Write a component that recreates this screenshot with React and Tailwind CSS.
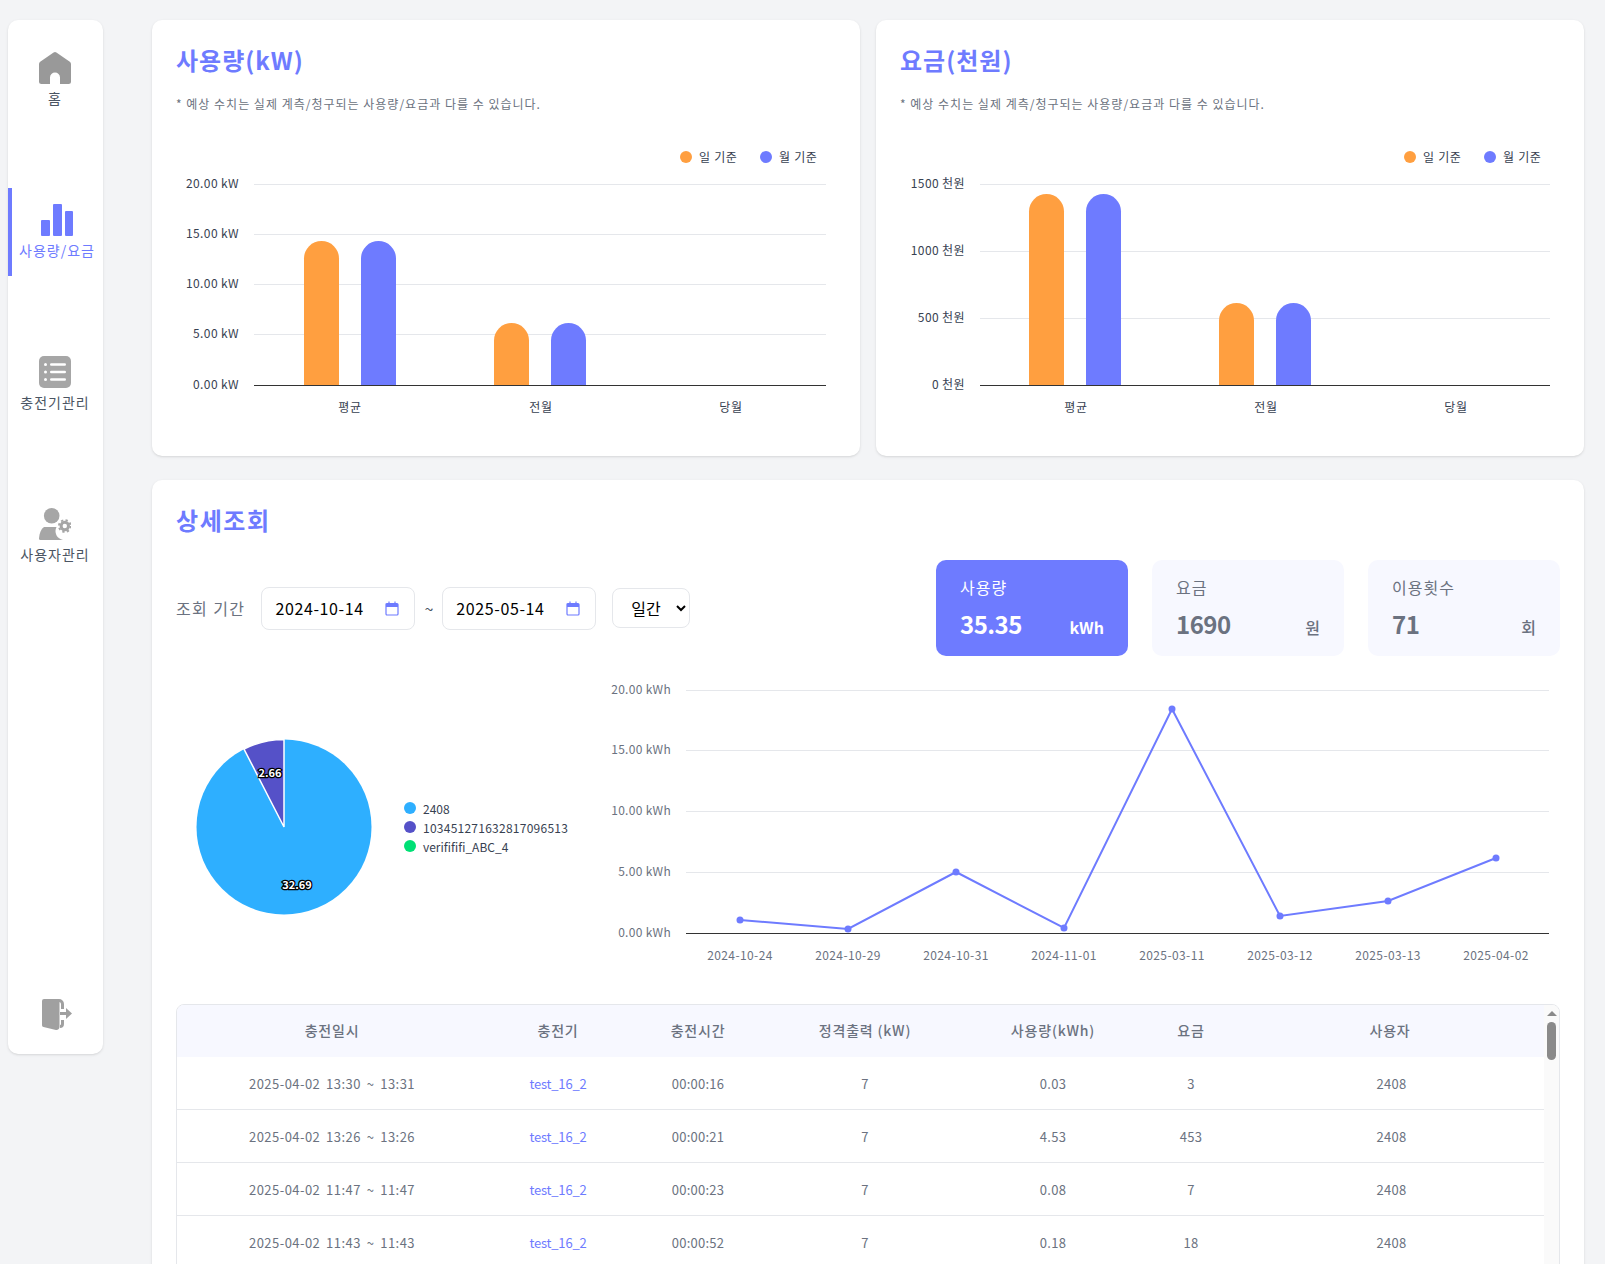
const BLUE = '#6e7bff';
const ORANGE = '#ff9f40';

const usageChart = {
  viewBox: '176 128 660 300',
  left: 254,
  right: 826,
  labelX: 239,
  grid: [
    { y: 184, label: '20.00 kW' },
    { y: 234, label: '15.00 kW' },
    { y: 284, label: '10.00 kW' },
    { y: 334, label: '5.00 kW' },
    { y: 385, label: '0.00 kW' },
  ],
  bars: [
    { x: 304, top: 241, color: ORANGE },
    { x: 361, top: 241, color: BLUE },
    { x: 494, top: 323, color: ORANGE },
    { x: 551, top: 323, color: BLUE },
  ],
  cats: [350, 541, 731],
  legend: [686, 766],
};

const costChart = {
  viewBox: '900 128 660 300',
  left: 980,
  right: 1550,
  labelX: 965,
  grid: [
    { y: 184, label: '1500 천원' },
    { y: 251, label: '1000 천원' },
    { y: 318, label: '500 천원' },
    { y: 385, label: '0 천원' },
  ],
  bars: [
    { x: 1029, top: 194, color: ORANGE },
    { x: 1086, top: 194, color: BLUE },
    { x: 1219, top: 303, color: ORANGE },
    { x: 1276, top: 303, color: BLUE },
  ],
  cats: [1076, 1266, 1456],
  legend: [1410, 1490],
};

const linePoints = [
  { x: 740, y: 920, date: '2024-10-24' },
  { x: 848, y: 929, date: '2024-10-29' },
  { x: 956, y: 872, date: '2024-10-31' },
  { x: 1064, y: 928, date: '2024-11-01' },
  { x: 1172, y: 709, date: '2025-03-11' },
  { x: 1280, y: 916, date: '2025-03-12' },
  { x: 1388, y: 901, date: '2025-03-13' },
  { x: 1496, y: 858, date: '2025-04-02' },
];

const rows = [
  { time: '2025-04-02 13:30 ~ 13:31', dur: '00:00:16', kwh: '0.03', fee: '3' },
  { time: '2025-04-02 13:26 ~ 13:26', dur: '00:00:21', kwh: '4.53', fee: '453' },
  { time: '2025-04-02 11:47 ~ 11:47', dur: '00:00:23', kwh: '0.08', fee: '7' },
  { time: '2025-04-02 11:43 ~ 11:43', dur: '00:00:52', kwh: '0.18', fee: '18' },
];

function HomeIcon() {
  return (
    <svg width="32" height="32" viewBox="0 0 32 32" fill="#999999">
      <path d="M14.6.5a2.5 2.5 0 0 1 2.8 0L30.8 9.8A2.8 2.8 0 0 1 32 12v17.5a2.5 2.5 0 0 1-2.5 2.5H21v-6.5a5 5 0 0 0-10 0V32H2.5A2.5 2.5 0 0 1 0 29.5V12a2.8 2.8 0 0 1 1.2-2.2z" />
    </svg>
  );
}

function BarsIcon() {
  return (
    <svg width="32" height="32" viewBox="0 0 32 32" fill={BLUE}>
      <rect x="0" y="16" width="9" height="16" rx="1" />
      <rect x="12" y="0" width="9" height="32" rx="1" />
      <rect x="24" y="7" width="8" height="25" rx="1" />
    </svg>
  );
}

function ListIcon() {
  return (
    <svg width="32" height="32" viewBox="0 0 32 32">
      <rect width="32" height="32" rx="5" fill="#a6a6a6" />
      <g fill="#ffffff">
        <circle cx="6.5" cy="8.5" r="1.5" />
        <circle cx="6.5" cy="16" r="1.5" />
        <circle cx="6.5" cy="23.5" r="1.5" />
        <rect x="11" y="7.2" width="16" height="2.6" rx="1.3" />
        <rect x="11" y="14.7" width="16" height="2.6" rx="1.3" />
        <rect x="11" y="22.2" width="16" height="2.6" rx="1.3" />
      </g>
    </svg>
  );
}

function UserGearIcon() {
  return (
    <svg width="32" height="32" viewBox="0 0 32 32" fill="#a6a6a6">
      <circle cx="12.700" cy="7.800" r="7.800" />
      <path d="M5 19h12.500a9 9 0 0 0 6.500 13H1.500A1.500 1.500 0 0 1 0 30.300C.5 25 2 21 5 19z" />
      <circle cx="25.800" cy="18" r="3.700" fill="none" stroke="#a6a6a6" strokeWidth="3" />
      <circle cx="25.800" cy="18" r="5.800" fill="none" stroke="#a6a6a6" strokeWidth="2" strokeDasharray="2.300 2.260" />
    </svg>
  );
}

function DoorIcon() {
  return (
    <svg width="30" height="32" viewBox="0 0 30 32" fill="#a0a0a0">
      <path d="M0 2a2 2 0 0 1 2-2h15a5 5 0 0 1 5 5v5h-3V5a2 2 0 0 0-1.500-2v25a3 3 0 0 1-3.500 3L1.500 28A2 2 0 0 1 0 26z" />
      <path d="M19 21h3v4a4 4 0 0 1-4 4v-3a1 1 0 0 0 1-1z" />
      <path d="M18 13h6V9l6 5.500-6 5.500v-4h-6z" />
    </svg>
  );
}

function CalendarIcon() {
  return (
    <svg width="14" height="15" viewBox="0 0 14 15" fill="none" stroke={BLUE}>
      <rect x="1" y="2.500" width="12" height="11.500" rx="1" strokeWidth="1.200" />
      <path d="M1 4.500h12" strokeWidth="3" />
      <path d="M4 0.500v2M10 0.500v2" strokeWidth="1.200" />
    </svg>
  );
}

function NavItem({ icon, label, active }) {
  return (
    <div
      className={
        active
          ? 'flex h-[88px] flex-col items-center border-l-4 border-[#6e7bff] pt-4 pr-px text-[#6e7bff]'
          : 'flex h-[88px] flex-col items-center pt-4 pr-px text-[#4b5563]'
      }
    >
      {icon}
      <span className="mt-1 text-sm leading-5 tracking-[1px] whitespace-nowrap">{label}</span>
    </div>
  );
}

function Sidebar() {
  return (
    <aside className="flex h-[1034px] w-[95px] shrink-0 flex-col justify-between rounded-[10px] bg-white pt-4 pb-[23px] shadow-sm">
      <nav className="flex flex-col gap-16">
        <NavItem icon={<HomeIcon />} label="홈" />
        <NavItem icon={<BarsIcon />} label="사용량/요금" active />
        <NavItem icon={<ListIcon />} label="충전기관리" />
        <NavItem icon={<UserGearIcon />} label="사용자관리" />
      </nav>
      <div className="flex justify-center pl-[2px]">
        <DoorIcon />
      </div>
    </aside>
  );
}

function BarChart({ chart }) {
  const base = 385;
  const width = 35;
  const r = 17.5;
  return (
    <svg width="660" height="300" viewBox={chart.viewBox} className="mt-4 block">
      {chart.grid.map((g, i) => (
        <g key={g.y}>
          <line
            x1={chart.left}
            x2={chart.right}
            y1={g.y + 0.5}
            y2={g.y + 0.5}
            stroke={i === chart.grid.length - 1 ? '#333333' : '#e5e7eb'}
          />
          <text x={chart.labelX} y={g.y + 4} textAnchor="end" fontSize="12" letterSpacing="0.4" fill="#374151">
            {g.label}
          </text>
        </g>
      ))}
      {chart.bars.map((b) => (
        <path
          key={b.x}
          fill={b.color}
          d={`M${b.x} ${base}V${b.top + r}a${r} ${r} 0 0 1 ${width} 0V${base}z`}
        />
      ))}
      {['평균', '전월', '당월'].map((c, i) => (
        <text key={c} x={chart.cats[i]} y={412} textAnchor="middle" fontSize="12" letterSpacing="0.7" fill="#374151">
          {c}
        </text>
      ))}
      {['일 기준', '월 기준'].map((c, i) => (
        <g key={c}>
          <circle cx={chart.legend[i]} cy={157} r="6" fill={i === 0 ? ORANGE : BLUE} />
          <text x={chart.legend[i] + 13} y={162} fontSize="12" letterSpacing="0.7" fill="#374151">
            {c}
          </text>
        </g>
      ))}
    </svg>
  );
}

function ChartCard({ title, chart }) {
  return (
    <section className="h-[436px] rounded-[10px] bg-white p-6 shadow-sm">
      <h2 className="text-2xl leading-8 font-bold tracking-[1px] text-[#6e7bff]">{title}</h2>
      <p className="mt-5 text-xs leading-4 tracking-[1px] text-[#6b7280]">
        * 예상 수치는 실제 계측/청구되는 사용량/요금과 다를 수 있습니다.
      </p>
      <BarChart chart={chart} />
    </section>
  );
}

function DateField({ value }) {
  return (
    <div className="flex h-[43px] w-[154px] items-center justify-between rounded-lg border border-[#e5e7eb] pr-[15px] pl-[13px] text-black">
      <span className="tracking-[0.6px]">{value}</span>
      <CalendarIcon />
    </div>
  );
}

function StatCard({ label, value, unit, active }) {
  return (
    <div
      className={
        active
          ? 'h-24 w-48 rounded-[10px] bg-[#6e7bff] px-6 pt-[15px] text-white'
          : 'h-24 w-48 rounded-[10px] bg-[#f7f8ff] px-6 pt-[15px] text-[#6b7280]'
      }
    >
      <div className="text-base leading-6 tracking-[1px]">{label}</div>
      <div className="mt-[9px] flex items-baseline justify-between">
        <span className="text-2xl leading-8 font-bold tracking-[-0.5px]">{value}</span>
        <span className={active ? 'text-base font-bold' : 'text-base font-medium'}>{unit}</span>
      </div>
    </div>
  );
}

function PieChart() {
  return (
    <svg width="228" height="300" viewBox="176 672 228 300" className="shrink-0">
      <circle cx="284" cy="827" r="87.500" fill="#2eafff" />
      <path d="M284 827V739.500A87.500 87.500 0 0 0 244 749.100z" fill="#5551c8" stroke="#ffffff" strokeWidth="1.500" />
      <g fontSize="11" fontWeight="700" fill="#ffffff" stroke="#000000" strokeWidth="2.500" paintOrder="stroke" textAnchor="middle">
        <text x="270" y="777">2.66</text>
        <text x="297" y="889">32.69</text>
      </g>
    </svg>
  );
}

function LineChart() {
  const grid = [
    { y: 690, label: '20.00 kWh' },
    { y: 750, label: '15.00 kWh' },
    { y: 811, label: '10.00 kWh' },
    { y: 872, label: '5.00 kWh' },
    { y: 933, label: '0.00 kWh' },
  ];
  return (
    <svg width="970" height="300" viewBox="590 672 970 300" className="ml-auto shrink-0">
      {grid.map((g, i) => (
        <g key={g.y}>
          <line
            x1="686"
            x2="1549"
            y1={g.y + 0.5}
            y2={g.y + 0.5}
            stroke={i === 4 ? '#333333' : '#e5e7eb'}
          />
          <text x="671" y={g.y + 4} textAnchor="end" fontSize="12" letterSpacing="0.3" fill="#6b7280">
            {g.label}
          </text>
        </g>
      ))}
      <polyline
        fill="none"
        stroke={BLUE}
        strokeWidth="2"
        points={linePoints.map((p) => `${p.x},${p.y}`).join(' ')}
      />
      {linePoints.map((p) => (
        <g key={p.date}>
          <circle cx={p.x} cy={p.y} r="3.500" fill={BLUE} />
          <text x={p.x} y="960" textAnchor="middle" fontSize="12" letterSpacing="0.4" fill="#6b7280">
            {p.date}
          </text>
        </g>
      ))}
    </svg>
  );
}

function UsageTable() {
  return (
    <div className="mt-8 flex overflow-hidden rounded-t-lg border border-[#e5e7eb]">
      <table className="w-[1367px] table-fixed border-collapse text-center text-[13px] tracking-[0.25px] text-[#6b7280]">
        <colgroup>
          <col className="w-[310px]" />
          <col className="w-[142px]" />
          <col className="w-[138px]" />
          <col className="w-[196px]" />
          <col className="w-[180px]" />
          <col className="w-[96px]" />
          <col className="w-[305px]" />
        </colgroup>
        <thead>
          <tr className="h-[52px] bg-[#f7f8ff] text-sm tracking-[0.8px]">
            <th className="pb-[2px] font-medium">충전일시</th>
            <th className="pb-[2px] font-medium">충전기</th>
            <th className="pb-[2px] font-medium">충전시간</th>
            <th className="pb-[2px] font-medium">정격출력 (kW)</th>
            <th className="pb-[2px] font-medium">사용량(kWh)</th>
            <th className="pb-[2px] font-medium">요금</th>
            <th className="pr-[3px] pb-[2px] font-medium">사용자</th>
          </tr>
        </thead>
        <tbody>
          {rows.map((r) => (
            <tr key={r.time} className="h-[53px] border-b border-[#e5e7eb] first:h-[52px]">
              <td className="pt-[2px] tracking-[0.45px] [word-spacing:2.5px]">{r.time}</td>
              <td className="pt-[2px] tracking-[-0.2px] text-[#6e7bff]">test_16_2</td>
              <td className="pt-[2px]">{r.dur}</td>
              <td className="pt-[2px]">7</td>
              <td className="pt-[2px]">{r.kwh}</td>
              <td className="pt-[2px]">{r.fee}</td>
              <td className="pt-[2px]">2408</td>
            </tr>
          ))}
        </tbody>
      </table>
      <div className="flex flex-1 flex-col items-center bg-[#fafafa] pt-[6px]">
        <div className="h-0 w-0 border-x-[5px] border-b-[5px] border-x-transparent border-b-[#8a8a8a]" />
        <div className="mt-[6px] h-[38px] w-[9px] rounded-full bg-[#8a8a8a]" />
      </div>
    </div>
  );
}

function DetailCard() {
  return (
    <section className="mt-6 rounded-[10px] bg-white p-6 shadow-sm">
      <h2 className="text-2xl leading-8 font-bold tracking-[1.6px] text-[#6e7bff]">상세조회</h2>
      <div className="mt-6 flex items-center justify-between">
        <div className="flex items-center">
          <span className="mr-4 text-base tracking-[1.4px] text-[#6b7280]">조회 기간</span>
          <DateField value="2024-10-14" />
          <span className="mx-[9px] text-base text-[#4b5563]">~</span>
          <DateField value="2025-05-14" />
          <select className="ml-4 h-10 w-[78px] rounded-lg border border-[#e5e7eb] pl-[14px] text-black" defaultValue="일간">
            <option>일간</option>
            <option>월간</option>
          </select>
        </div>
        <div className="flex gap-6">
          <StatCard label="사용량" value="35.35" unit="kWh" active />
          <StatCard label="요금" value="1690" unit="원" />
          <StatCard label="이용횟수" value="71" unit="회" />
        </div>
      </div>
      <div className="mt-4 flex h-[300px] items-center">
        <PieChart />
        <ul className="mt-[10px] text-xs leading-[19px] text-[#374151]">
          <li className="flex items-center gap-[7px]"><span className="size-3 rounded-full bg-[#2eafff]" />2408</li>
          <li className="flex items-center gap-[7px] tracking-[0.25px]"><span className="size-3 rounded-full bg-[#5551c8]" />103451271632817096513</li>
          <li className="flex items-center gap-[7px]"><span className="size-3 rounded-full bg-[#00e075]" />verifififi_ABC_4</li>
        </ul>
        <LineChart />
      </div>
      <UsageTable />
    </section>
  );
}

export default function App() {
  return (
    <div className="flex h-screen overflow-hidden bg-gray-100 pt-5 pr-[21px] pl-2 font-['Noto_Sans_CJK_KR',sans-serif]">
      <Sidebar />
      <main className="ml-[49px] min-w-0 flex-1">
        <div className="grid grid-cols-2 gap-4">
          <ChartCard title="사용량(kW)" chart={usageChart} />
          <ChartCard title="요금(천원)" chart={costChart} />
        </div>
        <DetailCard />
      </main>
    </div>
  );
}
